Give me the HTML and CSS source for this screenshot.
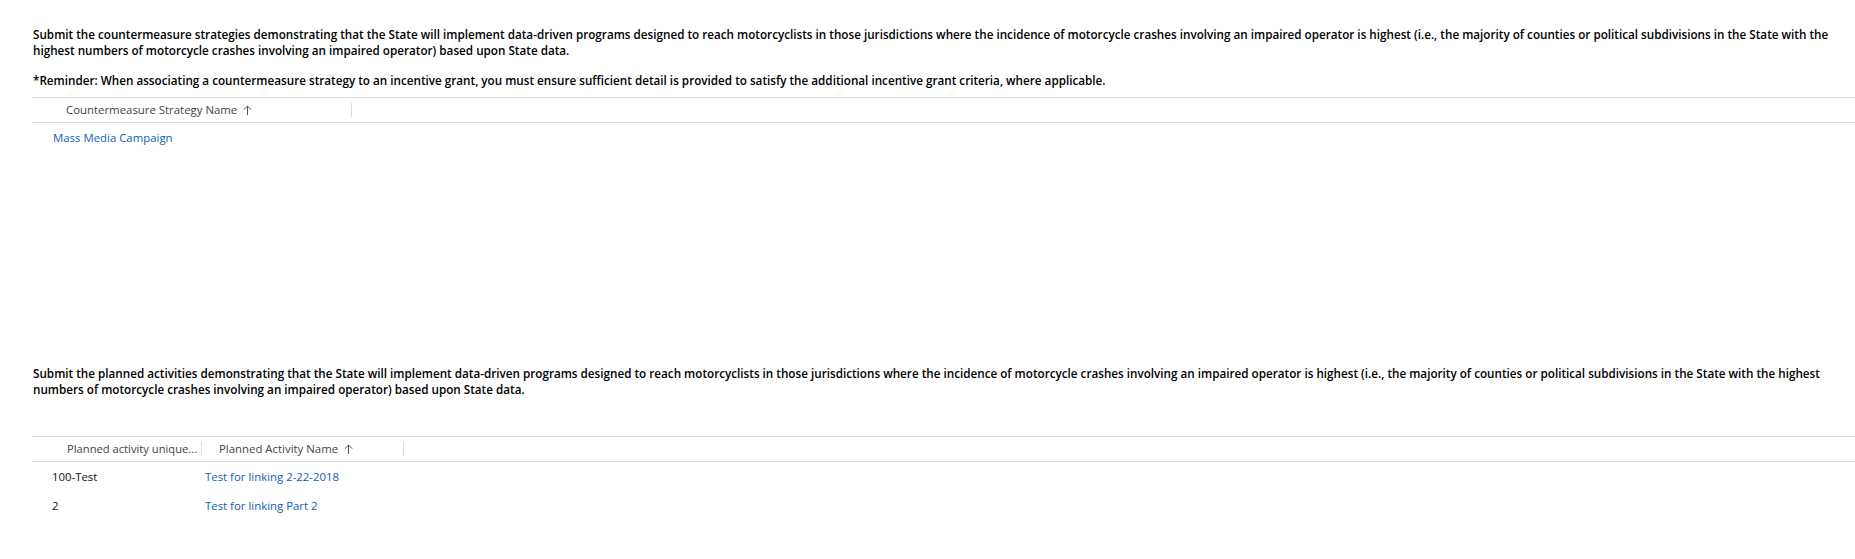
FILE: index.html
```html
<!DOCTYPE html>
<html lang="en">
<head>
<meta charset="utf-8">
<title>Motorcyclist Awareness – Impaired Operator Countermeasures</title>
<link rel="stylesheet" href="styles.css">
</head>
<body>
<main class="form">
  <section class="block block-strategies">
    <p class="desc">Submit the countermeasure strategies demonstrating that the State will implement data-driven programs designed to reach motorcyclists in those jurisdictions where the incidence of motorcycle crashes involving an impaired operator is highest (i.e., the majority of counties or political subdivisions in the State with the highest numbers of motorcycle crashes involving an impaired operator) based upon State data.</p>
    <p class="desc reminder">*Reminder: When associating a countermeasure strategy to an incentive grant, you must ensure sufficient detail is provided to satisfy the additional incentive grant criteria, where applicable.</p>
    <div class="grid grid-strategies">
      <div class="grid-head">
        <div class="hcell"><span class="hlabel">Countermeasure Strategy Name</span><svg class="sort" width="9" height="10" viewBox="0 0 9 10"><path d="M4.5 10V1M0.8 4.7L4.5 1L8.2 4.7" fill="none" stroke="#555" stroke-width="1"/></svg></div>
      </div>
      <div class="grid-body">
        <div class="row">
          <div class="cell cell-link"><a href="#" class="link">Mass Media Campaign</a></div>
        </div>
      </div>
    </div>
  </section>

  <section class="block block-activities">
    <p class="desc">Submit the planned activities demonstrating that the State will implement data-driven programs designed to reach motorcyclists in those jurisdictions where the incidence of motorcycle crashes involving an impaired operator is highest (i.e., the majority of counties or political subdivisions in the State with the highest numbers of motorcycle crashes involving an impaired operator) based upon State data.</p>
    <div class="grid grid-activities">
      <div class="grid-head">
        <div class="hcell hcell-first" title="Planned activity unique identifier"><span class="hlabel">Planned activity unique...</span></div>
        <div class="hcell hcell-second"><span class="hlabel">Planned Activity Name</span><svg class="sort" width="9" height="10" viewBox="0 0 9 10"><path d="M4.5 10V1M0.8 4.7L4.5 1L8.2 4.7" fill="none" stroke="#555" stroke-width="1"/></svg></div>
      </div>
      <div class="grid-body">
        <div class="row">
          <div class="cell cell-id">100-Test</div>
          <div class="cell cell-name"><a href="#" class="link">Test for linking 2-22-2018</a></div>
        </div>
        <div class="row">
          <div class="cell cell-id">2</div>
          <div class="cell cell-name"><a href="#" class="link">Test for linking Part 2</a></div>
        </div>
      </div>
    </div>
  </section>
</main>
</body>
</html>
```
FILE: styles.css
```css
html, body {
  margin: 0;
  padding: 0;
  background: #ffffff;
}

.form {
  padding: 26px 0 0 33px;
  font-family: "Open Sans", "Noto Sans", sans-serif;
  color: #000;
}

.desc {
  margin: 0;
  font-size: 11.7px;
  font-weight: 600;
  line-height: 16px;
  color: #000;
}

.reminder {
  margin-top: 14px;
}

.grid {
  margin-top: 9px;
  border-top: 1px solid #dcdcdc;
}

.grid-activities {
  margin-top: 39px;
}

.grid-head {
  display: grid;
  height: 24px;
  align-items: center;
  border-bottom: 1px solid #dcdcdc;
}

.grid-strategies .grid-head,
.grid-strategies .row {
  grid-template-columns: 319px 1fr;
}

.grid-activities .grid-head,
.grid-activities .row {
  grid-template-columns: 169px 202px 1fr;
}

.hcell {
  display: flex;
  align-items: center;
  height: 14px;
  padding-left: 33px;
  border-right: 1px solid #dcdcdc;
  box-sizing: border-box;
  font-size: 11.4px;
  line-height: 14px;
  color: #444;
  white-space: nowrap;
}

.hcell-first {
  padding-left: 34px;
  font-size: 11.2px;
}

.hcell-second {
  padding-left: 17px;
}

.sort {
  flex: none;
  margin-left: 6px;
}

.grid-strategies .grid-body {
  min-height: 242px;
}

.row {
  display: grid;
  height: 29px;
  align-items: center;
}

.cell {
  font-size: 11.4px;
  line-height: 14px;
  color: #111;
  white-space: nowrap;
}

.cell-link {
  padding-left: 20px;
}

.cell-id {
  padding-left: 19px;
}

.cell-name {
  padding-left: 3px;
}

.link {
  color: #1160b7;
  text-decoration: none;
}
```
